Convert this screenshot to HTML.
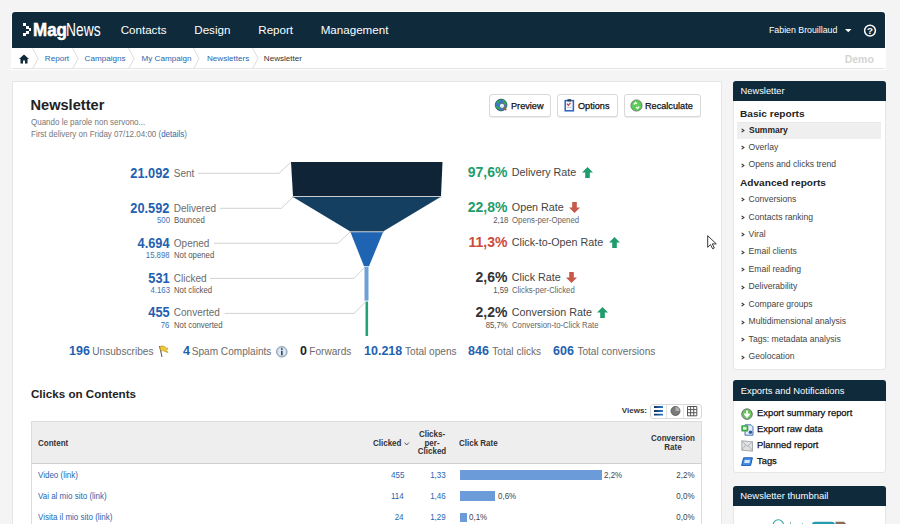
<!DOCTYPE html>
<html><head><meta charset="utf-8"><style>
html,body{margin:0;padding:0;}
body{width:900px;height:524px;overflow:hidden;background:#f4f4f4;position:relative;font-family:"Liberation Sans",sans-serif;}
.a{position:absolute;box-sizing:border-box;}
.t{position:absolute;white-space:nowrap;}
svg{position:absolute;overflow:visible;}
</style></head><body>
<div class="a" style="left:11px;top:11px;width:875px;height:59px;background:#fff;border-radius:4px 4px 0 0;"></div>
<div class="a" style="left:12px;top:12px;width:873px;height:36px;background:#0e2a3b;border-radius:3px 3px 0 0;"></div>
<div class="a" style="left:23.2px;top:23.2px;width:2.7px;height:2.7px;background:#fff;"></div>
<div class="a" style="left:25.9px;top:25.9px;width:2.7px;height:2.7px;background:#fff;"></div>
<div class="a" style="left:28.6px;top:28.4px;width:2.7px;height:2.7px;background:#fff;"></div>
<div class="a" style="left:25.9px;top:30.9px;width:2.7px;height:2.7px;background:#fff;"></div>
<div class="a" style="left:23.2px;top:33.3px;width:2.7px;height:2.7px;background:#fff;"></div>
<div class="t" style="left:33.3px;top:21.98px;font-size:17.5px;line-height:17.5px;color:#fff;font-weight:bold;transform:scaleX(0.97);transform-origin:left center;-webkit-text-stroke:0.5px #fff;">Mag</div>
<div class="t" style="left:65.8px;top:21.98px;font-size:17.5px;line-height:17.5px;color:#fff;transform:scaleX(0.79);transform-origin:left center;">News</div>
<div class="t" style="left:120.7px;top:24.38px;font-size:11.6px;line-height:11.6px;color:#fff;">Contacts</div>
<div class="t" style="left:194.3px;top:24.38px;font-size:11.6px;line-height:11.6px;color:#fff;">Design</div>
<div class="t" style="left:258.3px;top:24.38px;font-size:11.6px;line-height:11.6px;color:#fff;">Report</div>
<div class="t" style="left:320.7px;top:24.38px;font-size:11.6px;line-height:11.6px;color:#fff;">Management</div>
<div class="t" style="left:769.4px;top:25.06px;font-size:9.5px;line-height:9.5px;color:#fff;transform:scaleX(0.925);transform-origin:left center;">Fabien Brouillaud</div>
<svg style="left:845px;top:29px" width="7" height="4"><path d="M0 0H6.5L3.25 3.2Z" fill="#fff"/></svg>
<svg style="left:863px;top:24px" width="14" height="14"><circle cx="7" cy="6.6" r="5.4" fill="none" stroke="#fff" stroke-width="1.5"/><text x="7" y="10.1" font-family="Liberation Sans" font-weight="bold" font-size="9.8" fill="#fff" text-anchor="middle">?</text></svg>
<div class="a" style="left:12px;top:68px;width:873px;height:1px;background:#e4e4e4;"></div>
<svg style="left:18.6px;top:53.8px" width="11" height="10"><path d="M5 0.5L0 5H1.5V9.5H4V6.5H6V9.5H8.5V5H10Z" fill="#0f283a"/></svg>
<svg style="left:31.5px;top:48px" width="8" height="21"><path d="M0.5 0L6 10.5L0.5 21" fill="none" stroke="#dedede" stroke-width="1"/></svg>
<svg style="left:72.2px;top:48px" width="8" height="21"><path d="M0.5 0L6 10.5L0.5 21" fill="none" stroke="#dedede" stroke-width="1"/></svg>
<svg style="left:127.8px;top:48px" width="8" height="21"><path d="M0.5 0L6 10.5L0.5 21" fill="none" stroke="#dedede" stroke-width="1"/></svg>
<svg style="left:192.8px;top:48px" width="8" height="21"><path d="M0.5 0L6 10.5L0.5 21" fill="none" stroke="#dedede" stroke-width="1"/></svg>
<svg style="left:252.0px;top:48px" width="8" height="21"><path d="M0.5 0L6 10.5L0.5 21" fill="none" stroke="#dedede" stroke-width="1"/></svg>
<div class="t" style="left:44.8px;top:55.14px;font-size:8.1px;line-height:8.1px;color:#2a66ae;">Report</div>
<div class="t" style="left:84.6px;top:55.14px;font-size:8.1px;line-height:8.1px;color:#2a66ae;">Campaigns</div>
<div class="t" style="left:141.5px;top:55.14px;font-size:8.1px;line-height:8.1px;color:#2a66ae;">My Campaign</div>
<div class="t" style="left:207px;top:55.14px;font-size:8.1px;line-height:8.1px;color:#2a66ae;">Newsletters</div>
<div class="t" style="left:263.8px;top:55.14px;font-size:8.1px;line-height:8.1px;color:#333;">Newsletter</div>
<div class="t" style="right:26.200000000000045px;top:53.61px;font-size:10.5px;line-height:10.5px;color:#d4d4d4;font-weight:bold;">Demo</div>
<div class="a" style="left:12px;top:81px;width:710px;height:460px;background:#fff;border:1px solid #e6e6e6;"></div>
<div class="t" style="left:30.5px;top:98.14px;font-size:14.6px;line-height:14.6px;color:#222;font-weight:bold;">Newsletter</div>
<div class="t" style="left:31px;top:118.22px;font-size:8.6px;line-height:8.6px;color:#777;transform:scaleX(0.93);transform-origin:left center;">Quando le parole non servono...</div>
<div class="t" style="left:31px;top:129.72px;font-size:8.6px;line-height:8.6px;color:#777;transform:scaleX(0.93);transform-origin:left center;">First delivery on Friday 07/12.04:00 (<span style="color:#2a66ae">details</span>)</div>
<div class="a" style="left:489px;top:94px;width:62px;height:22.5px;background:#fff;border:1px solid #d9d9d9;border-radius:3px;box-shadow:0 1px 0 #ececec;"></div>
<div class="t" style="left:510.7px;top:100.84px;font-size:9.4px;line-height:9.4px;color:#111;transform:scaleX(0.975);transform-origin:left center;-webkit-text-stroke:0.25px #111;">Preview</div>
<div class="a" style="left:556.5px;top:94px;width:61.5px;height:22.5px;background:#fff;border:1px solid #d9d9d9;border-radius:3px;box-shadow:0 1px 0 #ececec;"></div>
<div class="t" style="left:577.6px;top:100.84px;font-size:9.4px;line-height:9.4px;color:#111;transform:scaleX(0.975);transform-origin:left center;-webkit-text-stroke:0.25px #111;">Options</div>
<div class="a" style="left:624.2px;top:94px;width:77.19999999999993px;height:22.5px;background:#fff;border:1px solid #d9d9d9;border-radius:3px;box-shadow:0 1px 0 #ececec;"></div>
<div class="t" style="left:645.4px;top:100.84px;font-size:9.4px;line-height:9.4px;color:#111;transform:scaleX(0.975);transform-origin:left center;-webkit-text-stroke:0.25px #111;">Recalculate</div>
<svg style="left:494px;top:98.3px" width="14" height="14"><circle cx="7.1" cy="7" r="5.9" fill="#3a78c8"/><path d="M2.5 4.5Q4 2 6 1.6L5.5 4L3.2 6ZM8.5 1.5Q11 2.5 12.5 5L11 7.5L9.5 5.5ZM1.6 8Q3 10.5 5 12L5.5 9.5L3.5 8Z" fill="#2fae4a"/><circle cx="7.1" cy="7" r="5.9" fill="none" stroke="#2a5a40" stroke-width="0.7"/><circle cx="8" cy="7.8" r="2.6" fill="#dff0ff" stroke="#567" stroke-width="0.9"/><path d="M9.8 9.8L12.3 12.3" stroke="#9a6a30" stroke-width="1.6"/></svg>
<svg style="left:563.5px;top:99px" width="11" height="13"><rect x="1.2" y="1.6" width="8.2" height="10.2" fill="#f4f6fb" stroke="#2d64c0" stroke-width="1.5"/><rect x="3.5" y="0.2" width="3.6" height="2.2" fill="#2a3a50"/><path d="M3 4.6L4.3 6.3L6.5 3.8" fill="none" stroke="#c03838" stroke-width="1.1"/><path d="M3 8.5H7.4" stroke="#b8c4d0" stroke-width="0.8"/></svg>
<svg style="left:630px;top:99px" width="13" height="13"><circle cx="6.5" cy="6.5" r="5.6" fill="#5ccc58" stroke="#6a6a6a" stroke-width="0.8"/><path d="M3.8 5.5L5.5 3.5L7 5M9.2 7.5L7.5 9.5L6 8" fill="none" stroke="#f2fff2" stroke-width="1.3"/></svg>
<svg style="left:0;top:0" width="900" height="524"><path d="M198 173.3H279L290.5 162.5M220 208.3H281.5L293 197M214 243.3H338L350 232M210 278.4H354L365 267M224.7 313.4H354L365.5 302" fill="none" stroke="#d2d2d2" stroke-width="1"/><path d="M292 196.2H441.5V197.4H292Z" fill="#b8bcc0"/><path d="M349.5 231.2H384V232.4H349.5Z" fill="#b8c0c8"/><path d="M291 162H442.5L441 196H293Z" fill="#0f2537"/><path d="M293 197H440.5L383.5 231.2H350Z" fill="#153f60"/><path d="M350.5 232.2H383L369 266.3H364Z" fill="#1f64b3"/><rect x="364.5" y="267" width="4" height="33.6" fill="#6f9fd8"/><rect x="365.5" y="301.6" width="2.6" height="34.4" fill="#24a37a"/></svg>
<div class="t" style="right:730.5px;top:165.88px;font-size:14.2px;line-height:14.2px;color:#1f61b0;font-weight:bold;transform:scaleX(0.9);transform-origin:right center;">21.092</div>
<div class="t" style="left:173.8px;top:168.83px;font-size:10px;line-height:10px;color:#6b6b6b;">Sent</div>
<div class="t" style="right:730.5px;top:200.78px;font-size:14.2px;line-height:14.2px;color:#1f61b0;font-weight:bold;transform:scaleX(0.9);transform-origin:right center;">20.592</div>
<div class="t" style="left:173.8px;top:203.73px;font-size:10px;line-height:10px;color:#6b6b6b;">Delivered</div>
<div class="t" style="right:730.5px;top:216.39px;font-size:8.4px;line-height:8.4px;color:#3d73b8;transform:scaleX(0.93);transform-origin:right center;">500</div>
<div class="t" style="left:173.8px;top:216.39px;font-size:8.4px;line-height:8.4px;color:#555;transform:scaleX(0.93);transform-origin:left center;">Bounced</div>
<div class="t" style="right:730.5px;top:235.68px;font-size:14.2px;line-height:14.2px;color:#1f61b0;font-weight:bold;transform:scaleX(0.9);transform-origin:right center;">4.694</div>
<div class="t" style="left:173.8px;top:238.63px;font-size:10px;line-height:10px;color:#6b6b6b;">Opened</div>
<div class="t" style="right:730.5px;top:251.29px;font-size:8.4px;line-height:8.4px;color:#3d73b8;transform:scaleX(0.93);transform-origin:right center;">15.898</div>
<div class="t" style="left:173.8px;top:251.29px;font-size:8.4px;line-height:8.4px;color:#555;transform:scaleX(0.93);transform-origin:left center;">Not opened</div>
<div class="t" style="right:730.5px;top:270.58px;font-size:14.2px;line-height:14.2px;color:#1f61b0;font-weight:bold;transform:scaleX(0.9);transform-origin:right center;">531</div>
<div class="t" style="left:173.8px;top:273.53px;font-size:10px;line-height:10px;color:#6b6b6b;">Clicked</div>
<div class="t" style="right:730.5px;top:286.19px;font-size:8.4px;line-height:8.4px;color:#3d73b8;transform:scaleX(0.93);transform-origin:right center;">4.163</div>
<div class="t" style="left:173.8px;top:286.19px;font-size:8.4px;line-height:8.4px;color:#555;transform:scaleX(0.93);transform-origin:left center;">Not clicked</div>
<div class="t" style="right:730.5px;top:305.48px;font-size:14.2px;line-height:14.2px;color:#1f61b0;font-weight:bold;transform:scaleX(0.9);transform-origin:right center;">455</div>
<div class="t" style="left:173.8px;top:308.43px;font-size:10px;line-height:10px;color:#6b6b6b;">Converted</div>
<div class="t" style="right:730.5px;top:321.09px;font-size:8.4px;line-height:8.4px;color:#3d73b8;transform:scaleX(0.93);transform-origin:right center;">76</div>
<div class="t" style="left:173.8px;top:321.09px;font-size:8.4px;line-height:8.4px;color:#555;transform:scaleX(0.93);transform-origin:left center;">Not converted</div>
<div class="t" style="right:392.5px;top:165.45px;font-size:14px;line-height:14px;color:#1f9d6c;font-weight:bold;">97,6%</div>
<div class="t" style="left:511.8px;top:167.40px;font-size:10.75px;line-height:10.75px;color:#444;">Delivery Rate</div>
<div class="t" style="right:392.5px;top:200.35px;font-size:14px;line-height:14px;color:#1f9d6c;font-weight:bold;">22,8%</div>
<div class="t" style="left:511.8px;top:202.30px;font-size:10.75px;line-height:10.75px;color:#444;">Open Rate</div>
<div class="t" style="right:392px;top:216.09px;font-size:8.4px;line-height:8.4px;color:#555;transform:scaleX(0.93);transform-origin:right center;">2,18</div>
<div class="t" style="left:511.8px;top:216.09px;font-size:8.4px;line-height:8.4px;color:#666;transform:scaleX(0.93);transform-origin:left center;">Opens-per-Opened</div>
<div class="t" style="right:392.5px;top:235.25px;font-size:14px;line-height:14px;color:#cc4a3d;font-weight:bold;">11,3%</div>
<div class="t" style="left:511.8px;top:237.20px;font-size:10.75px;line-height:10.75px;color:#444;">Click-to-Open Rate</div>
<div class="t" style="right:392.5px;top:270.15px;font-size:14px;line-height:14px;color:#333;font-weight:bold;">2,6%</div>
<div class="t" style="left:511.8px;top:272.10px;font-size:10.75px;line-height:10.75px;color:#444;">Click Rate</div>
<div class="t" style="right:392px;top:285.89px;font-size:8.4px;line-height:8.4px;color:#555;transform:scaleX(0.93);transform-origin:right center;">1,59</div>
<div class="t" style="left:511.8px;top:285.89px;font-size:8.4px;line-height:8.4px;color:#666;transform:scaleX(0.93);transform-origin:left center;">Clicks-per-Clicked</div>
<div class="t" style="right:392.5px;top:305.05px;font-size:14px;line-height:14px;color:#333;font-weight:bold;">2,2%</div>
<div class="t" style="left:511.8px;top:307.00px;font-size:10.75px;line-height:10.75px;color:#444;">Conversion Rate</div>
<div class="t" style="right:392px;top:320.79px;font-size:8.4px;line-height:8.4px;color:#555;transform:scaleX(0.93);transform-origin:right center;">85,7%</div>
<div class="t" style="left:511.8px;top:320.79px;font-size:8.4px;line-height:8.4px;color:#666;transform:scaleX(0.93);transform-origin:left center;">Conversion-to-Click Rate</div>
<svg style="left:582px;top:167.4px" width="12" height="11"><path d="M5.5 0L11 5.5H7.8V11H3.2V5.5H0Z" fill="#1f9d6c"/></svg>
<svg style="left:568.6px;top:202px" width="12" height="11"><path d="M5.5 11L11 5.5H7.8V0H3.2V5.5H0Z" fill="#c6594a"/></svg>
<svg style="left:608.5px;top:237px" width="12" height="11"><path d="M5.5 0L11 5.5H7.8V11H3.2V5.5H0Z" fill="#1f9d6c"/></svg>
<svg style="left:566px;top:272px" width="12" height="11"><path d="M5.5 11L11 5.5H7.8V0H3.2V5.5H0Z" fill="#c6594a"/></svg>
<svg style="left:597px;top:306.5px" width="12" height="11"><path d="M5.5 0L11 5.5H7.8V11H3.2V5.5H0Z" fill="#1f9d6c"/></svg>
<div class="t" style="left:69.3px;top:344.48px;font-size:13.6px;line-height:13.6px;color:#1f61b0;font-weight:bold;transform:scaleX(0.92);transform-origin:left center;">196</div>
<div class="t" style="left:92.3px;top:347.45px;font-size:10.1px;line-height:10.1px;color:#6b6b6b;">Unsubscribes</div>
<div class="t" style="left:182.7px;top:344.48px;font-size:13.6px;line-height:13.6px;color:#1f61b0;font-weight:bold;transform:scaleX(0.92);transform-origin:left center;">4</div>
<div class="t" style="left:191.7px;top:347.45px;font-size:10.1px;line-height:10.1px;color:#6b6b6b;">Spam Complaints</div>
<div class="t" style="left:300px;top:344.48px;font-size:13.6px;line-height:13.6px;color:#222;font-weight:bold;transform:scaleX(0.92);transform-origin:left center;">0</div>
<div class="t" style="left:309.3px;top:347.45px;font-size:10.1px;line-height:10.1px;color:#6b6b6b;">Forwards</div>
<div class="t" style="left:363.6px;top:344.48px;font-size:13.6px;line-height:13.6px;color:#1f61b0;font-weight:bold;transform:scaleX(0.92);transform-origin:left center;">10.218</div>
<div class="t" style="left:405px;top:347.45px;font-size:10.1px;line-height:10.1px;color:#6b6b6b;">Total opens</div>
<div class="t" style="left:468px;top:344.48px;font-size:13.6px;line-height:13.6px;color:#1f61b0;font-weight:bold;transform:scaleX(0.92);transform-origin:left center;">846</div>
<div class="t" style="left:492.3px;top:347.45px;font-size:10.1px;line-height:10.1px;color:#6b6b6b;">Total clicks</div>
<div class="t" style="left:552.8px;top:344.48px;font-size:13.6px;line-height:13.6px;color:#1f61b0;font-weight:bold;transform:scaleX(0.92);transform-origin:left center;">606</div>
<div class="t" style="left:577.4px;top:347.45px;font-size:10.1px;line-height:10.1px;color:#6b6b6b;">Total conversions</div>
<svg style="left:158px;top:345px" width="11" height="13"><path d="M1.5 1L4 12" stroke="#555" stroke-width="1"/><path d="M2 1.5Q5 0 7 2T10 3L8.5 5.5L10 7.5Q8 7 6 6T3 6.5Z" fill="#f0c838" stroke="#b89020" stroke-width="0.6"/></svg>
<svg style="left:276px;top:345.5px" width="12" height="12"><circle cx="5.8" cy="5.8" r="5.3" fill="#b8c8d8" stroke="#7890a8" stroke-width="0.8"/><circle cx="5.8" cy="5.8" r="4" fill="#dfe8f2"/><rect x="5" y="4.8" width="1.7" height="4.5" fill="#34506c"/><circle cx="5.85" cy="3" r="0.95" fill="#34506c"/></svg>
<div class="t" style="left:31px;top:388.08px;font-size:11.6px;line-height:11.6px;color:#222;font-weight:bold;">Clicks on Contents</div>
<div class="t" style="right:253px;top:407.03px;font-size:8px;line-height:8px;color:#333;font-weight:bold;">Views:</div>
<div class="a" style="left:649.5px;top:404px;width:52.3px;height:14.5px;background:#fff;border:1px solid #d8d8d8;border-radius:3px;"></div>
<div class="a" style="left:666.2px;top:404.5px;width:1px;height:13.5px;background:#e2e2e2;"></div>
<div class="a" style="left:683.2px;top:404.5px;width:1px;height:13.5px;background:#e2e2e2;"></div>
<svg style="left:653px;top:405px" width="12" height="12"><defs><linearGradient id="lg"><stop offset="0" stop-color="#0f3060"/><stop offset="1" stop-color="#2a7ad0"/></linearGradient></defs><path d="M1 2H10M1 6H10M1 9.6H10" stroke="url(#lg)" stroke-width="1.9"/></svg>
<svg style="left:670px;top:405px" width="12" height="12"><circle cx="5.5" cy="6" r="4.5" fill="#7a7a7a" stroke="#505050" stroke-width="0.8"/><path d="M5.5 6V1.9A4.1 4.1 0 0 1 9.6 6Z" fill="#b0b0b0"/></svg>
<svg style="left:687px;top:406px" width="11" height="11"><path d="M0.5 0.5H9.8V9.8H0.5ZM0.5 3.6H9.8M0.5 6.7H9.8M3.6 0.5V9.8M6.7 0.5V9.8" fill="none" stroke="#555" stroke-width="1"/></svg>
<div class="a" style="left:31px;top:421.3px;width:671px;height:120px;background:#fff;border:1px solid #dcdcdc;"></div>
<div class="a" style="left:31px;top:421.3px;width:671px;height:42.5px;background:#eeeeee;border:1px solid #dcdcdc;border-bottom:1px solid #d0d0d0;"></div>
<div class="t" style="left:38.2px;top:438.92px;font-size:8.6px;line-height:8.6px;color:#333;font-weight:bold;transform:scaleX(0.93);transform-origin:left center;">Content</div>
<div class="t" style="left:372.9px;top:438.82px;font-size:8.6px;line-height:8.6px;color:#333;font-weight:bold;transform:scaleX(0.93);transform-origin:left center;">Clicked</div>
<svg style="left:403.5px;top:441.8px" width="6" height="4"><path d="M0.6 0.6L2.7 3L4.8 0.6" fill="none" stroke="#444" stroke-width="0.9"/></svg>
<div class="t" style="left:231.5px;width:400px;text-align:center;top:429.72px;font-size:8.6px;line-height:8.6px;color:#333;font-weight:bold;transform:scaleX(0.93);transform-origin:center center;">Clicks-</div>
<div class="t" style="left:231.5px;width:400px;text-align:center;top:438.72px;font-size:8.6px;line-height:8.6px;color:#333;font-weight:bold;transform:scaleX(0.93);transform-origin:center center;">per-</div>
<div class="t" style="left:231.5px;width:400px;text-align:center;top:447.12px;font-size:8.6px;line-height:8.6px;color:#333;font-weight:bold;transform:scaleX(0.93);transform-origin:center center;">Clicked</div>
<div class="t" style="left:459px;top:438.82px;font-size:8.6px;line-height:8.6px;color:#333;font-weight:bold;transform:scaleX(0.93);transform-origin:left center;">Click Rate</div>
<div class="t" style="left:472.5px;width:400px;text-align:center;top:433.92px;font-size:8.6px;line-height:8.6px;color:#333;font-weight:bold;transform:scaleX(0.93);transform-origin:center center;">Conversion</div>
<div class="t" style="left:472.5px;width:400px;text-align:center;top:443.12px;font-size:8.6px;line-height:8.6px;color:#333;font-weight:bold;transform:scaleX(0.93);transform-origin:center center;">Rate</div>
<div class="t" style="left:38.2px;top:470.82px;font-size:8.6px;line-height:8.6px;color:#2a66ae;transform:scaleX(0.93);transform-origin:left center;">Video (link)</div>
<div class="t" style="right:496px;top:470.82px;font-size:8.6px;line-height:8.6px;color:#2a66ae;transform:scaleX(0.93);transform-origin:right center;">455</div>
<div class="t" style="right:454px;top:470.82px;font-size:8.6px;line-height:8.6px;color:#2a66ae;transform:scaleX(0.93);transform-origin:right center;">1,33</div>
<div class="a" style="left:459.5px;top:470.20000000000005px;width:142px;height:9.5px;background:#6b9cd9;"></div>
<div class="t" style="left:604.0px;top:470.82px;font-size:8.6px;line-height:8.6px;color:#444;transform:scaleX(0.93);transform-origin:left center;">2,2%</div>
<div class="t" style="right:205.5px;top:470.82px;font-size:8.6px;line-height:8.6px;color:#444;transform:scaleX(0.93);transform-origin:right center;">2,2%</div>
<div class="t" style="left:38.2px;top:492.02px;font-size:8.6px;line-height:8.6px;color:#2a66ae;transform:scaleX(0.93);transform-origin:left center;">Vai al mio sito (link)</div>
<div class="t" style="right:496px;top:492.02px;font-size:8.6px;line-height:8.6px;color:#2a66ae;transform:scaleX(0.93);transform-origin:right center;">114</div>
<div class="t" style="right:454px;top:492.02px;font-size:8.6px;line-height:8.6px;color:#2a66ae;transform:scaleX(0.93);transform-origin:right center;">1,46</div>
<div class="a" style="left:459.5px;top:491.40000000000003px;width:35.5px;height:9.5px;background:#6b9cd9;"></div>
<div class="t" style="left:497.5px;top:492.02px;font-size:8.6px;line-height:8.6px;color:#444;transform:scaleX(0.93);transform-origin:left center;">0,6%</div>
<div class="t" style="right:205.5px;top:492.02px;font-size:8.6px;line-height:8.6px;color:#444;transform:scaleX(0.93);transform-origin:right center;">0,0%</div>
<div class="t" style="left:38.2px;top:513.22px;font-size:8.6px;line-height:8.6px;color:#2a66ae;transform:scaleX(0.93);transform-origin:left center;">Visita il mio sito (link)</div>
<div class="t" style="right:496px;top:513.22px;font-size:8.6px;line-height:8.6px;color:#2a66ae;transform:scaleX(0.93);transform-origin:right center;">24</div>
<div class="t" style="right:454px;top:513.22px;font-size:8.6px;line-height:8.6px;color:#2a66ae;transform:scaleX(0.93);transform-origin:right center;">1,29</div>
<div class="a" style="left:459.5px;top:512.6px;width:7px;height:9.5px;background:#6b9cd9;"></div>
<div class="t" style="left:469.0px;top:513.22px;font-size:8.6px;line-height:8.6px;color:#444;transform:scaleX(0.93);transform-origin:left center;">0,1%</div>
<div class="t" style="right:205.5px;top:513.22px;font-size:8.6px;line-height:8.6px;color:#444;transform:scaleX(0.93);transform-origin:right center;">0,0%</div>
<div class="a" style="left:733px;top:81px;width:152.5px;height:289px;background:#fff;border:1px solid #e6e6e6;border-radius:3px;"></div>
<div class="a" style="left:733px;top:81px;width:152.5px;height:20px;background:#0e2a3b;border-radius:3px 3px 0 0;"></div>
<div class="t" style="left:740.6px;top:86.83px;font-size:9.3px;line-height:9.3px;color:#fff;">Newsletter</div>
<div class="t" style="left:739.7px;top:110.01px;font-size:9.2px;line-height:9.2px;color:#222;font-weight:bold;transform:scaleX(1.1);transform-origin:left center;">Basic reports</div>
<div class="a" style="left:737px;top:121.5px;width:144px;height:17.5px;background:#efefef;border-top:1px solid #e9e9e9;"></div>
<svg style="left:741.3px;top:128px" width="4" height="5"><path d="M0.6 0.9L2.9 2.5L0.6 4.1" fill="none" stroke="#333" stroke-width="1.1"/></svg>
<div class="t" style="left:749px;top:126.00px;font-size:8.5px;line-height:8.5px;color:#222;font-weight:bold;">Summary</div>
<svg style="left:741.3px;top:145px" width="4" height="5"><path d="M0.6 0.9L2.9 2.5L0.6 4.1" fill="none" stroke="#333" stroke-width="1.1"/></svg>
<div class="t" style="left:748.6px;top:143.02px;font-size:8.6px;line-height:8.6px;color:#444;">Overlay</div>
<svg style="left:741.3px;top:163px" width="4" height="5"><path d="M0.6 0.9L2.9 2.5L0.6 4.1" fill="none" stroke="#333" stroke-width="1.1"/></svg>
<div class="t" style="left:748.6px;top:160.42px;font-size:8.6px;line-height:8.6px;color:#444;">Opens and clicks trend</div>
<div class="t" style="left:739.9px;top:179.41px;font-size:9.2px;line-height:9.2px;color:#222;font-weight:bold;transform:scaleX(1.1);transform-origin:left center;">Advanced reports</div>
<svg style="left:741.3px;top:197px" width="4" height="5"><path d="M0.6 0.9L2.9 2.5L0.6 4.1" fill="none" stroke="#333" stroke-width="1.1"/></svg>
<div class="t" style="left:748.6px;top:195.02px;font-size:8.6px;line-height:8.6px;color:#444;">Conversions</div>
<svg style="left:741.3px;top:215px" width="4" height="5"><path d="M0.6 0.9L2.9 2.5L0.6 4.1" fill="none" stroke="#333" stroke-width="1.1"/></svg>
<div class="t" style="left:748.6px;top:212.50px;font-size:8.6px;line-height:8.6px;color:#444;">Contacts ranking</div>
<svg style="left:741.3px;top:232px" width="4" height="5"><path d="M0.6 0.9L2.9 2.5L0.6 4.1" fill="none" stroke="#333" stroke-width="1.1"/></svg>
<div class="t" style="left:748.6px;top:229.98px;font-size:8.6px;line-height:8.6px;color:#444;">Viral</div>
<svg style="left:741.3px;top:250px" width="4" height="5"><path d="M0.6 0.9L2.9 2.5L0.6 4.1" fill="none" stroke="#333" stroke-width="1.1"/></svg>
<div class="t" style="left:748.6px;top:247.46px;font-size:8.6px;line-height:8.6px;color:#444;">Email clients</div>
<svg style="left:741.3px;top:267px" width="4" height="5"><path d="M0.6 0.9L2.9 2.5L0.6 4.1" fill="none" stroke="#333" stroke-width="1.1"/></svg>
<div class="t" style="left:748.6px;top:264.94px;font-size:8.6px;line-height:8.6px;color:#444;">Email reading</div>
<svg style="left:741.3px;top:285px" width="4" height="5"><path d="M0.6 0.9L2.9 2.5L0.6 4.1" fill="none" stroke="#333" stroke-width="1.1"/></svg>
<div class="t" style="left:748.6px;top:282.42px;font-size:8.6px;line-height:8.6px;color:#444;">Deliverability</div>
<svg style="left:741.3px;top:302px" width="4" height="5"><path d="M0.6 0.9L2.9 2.5L0.6 4.1" fill="none" stroke="#333" stroke-width="1.1"/></svg>
<div class="t" style="left:748.6px;top:299.90px;font-size:8.6px;line-height:8.6px;color:#444;">Compare groups</div>
<svg style="left:741.3px;top:320px" width="4" height="5"><path d="M0.6 0.9L2.9 2.5L0.6 4.1" fill="none" stroke="#333" stroke-width="1.1"/></svg>
<div class="t" style="left:748.6px;top:317.38px;font-size:8.6px;line-height:8.6px;color:#444;">Multidimensional analysis</div>
<svg style="left:741.3px;top:337px" width="4" height="5"><path d="M0.6 0.9L2.9 2.5L0.6 4.1" fill="none" stroke="#333" stroke-width="1.1"/></svg>
<div class="t" style="left:748.6px;top:334.86px;font-size:8.6px;line-height:8.6px;color:#444;">Tags: metadata analysis</div>
<svg style="left:741.3px;top:355px" width="4" height="5"><path d="M0.6 0.9L2.9 2.5L0.6 4.1" fill="none" stroke="#333" stroke-width="1.1"/></svg>
<div class="t" style="left:748.6px;top:352.34px;font-size:8.6px;line-height:8.6px;color:#444;">Geolocation</div>
<div class="a" style="left:733px;top:380.2px;width:152.5px;height:93.3px;background:#fff;border:1px solid #e6e6e6;border-radius:3px;"></div>
<div class="a" style="left:733px;top:380.2px;width:152.5px;height:20.5px;background:#0e2a3b;border-radius:3px 3px 0 0;"></div>
<div class="t" style="left:740.7px;top:386.24px;font-size:9.4px;line-height:9.4px;color:#fff;">Exports and Notifications</div>
<div class="t" style="left:757.3px;top:408.81px;font-size:9.2px;line-height:9.2px;color:#111;transform:scaleX(1.02);transform-origin:left center;-webkit-text-stroke:0.25px #111;">Export summary report</div>
<div class="t" style="left:757.3px;top:424.81px;font-size:9.2px;line-height:9.2px;color:#111;transform:scaleX(1.02);transform-origin:left center;-webkit-text-stroke:0.25px #111;">Export raw data</div>
<div class="t" style="left:757.3px;top:440.81px;font-size:9.2px;line-height:9.2px;color:#111;transform:scaleX(1.02);transform-origin:left center;-webkit-text-stroke:0.25px #111;">Planned report</div>
<div class="t" style="left:757.3px;top:456.81px;font-size:9.2px;line-height:9.2px;color:#111;transform:scaleX(1.02);transform-origin:left center;-webkit-text-stroke:0.25px #111;">Tags</div>
<svg style="left:741px;top:408px" width="13" height="13"><circle cx="6" cy="6.1" r="5.3" fill="#68c25a" stroke="#6a6a78" stroke-width="0.9"/><path d="M6 2.6V7.2M3.4 5.6L6 8.9L8.6 5.6" fill="none" stroke="#fff" stroke-width="1.7"/></svg>
<svg style="left:740.5px;top:424px" width="13" height="12"><path d="M4 0.8H10L12 2.8V11.2H4Z" fill="#e4ecf6" stroke="#3a68b0" stroke-width="0.9"/><rect x="0.3" y="1.2" width="7" height="6.3" rx="0.8" fill="#3aa84a"/><rect x="2" y="2.8" width="3.6" height="3" fill="#d8f0d8"/><circle cx="9.5" cy="8.3" r="1.8" fill="#2f5fa8"/></svg>
<svg style="left:741px;top:440px" width="13" height="12"><path d="M0.8 0.8L11.5 1.8V11.2L0.8 10.2Z" fill="#dfe1e4" stroke="#999" stroke-width="0.8"/><path d="M0.8 0.8L6.2 6.6L11.5 1.8M0.8 10.2L4.6 5.2M11.5 11.2L7.5 5.6" fill="none" stroke="#a4a8ac" stroke-width="0.8"/></svg>
<svg style="left:741px;top:457px" width="13" height="10"><path d="M2.6 0.8H11.4L9.6 8.4H0.6Z" fill="#4a8ee0" stroke="#1a5ab8" stroke-width="1"/><path d="M3.8 3H9L8.4 6H3.1Z" fill="#d6e8fb"/></svg>
<div class="a" style="left:733px;top:485.5px;width:152.5px;height:60px;background:#fff;border:1px solid #e6e6e6;border-radius:3px;"></div>
<div class="a" style="left:733px;top:485.5px;width:152.5px;height:20px;background:#0e2a3b;border-radius:3px 3px 0 0;"></div>
<div class="t" style="left:740.3px;top:490.70px;font-size:9.45px;line-height:9.45px;color:#fff;">Newsletter thumbnail</div>
<svg style="left:707px;top:234.5px" width="12" height="15"><path d="M0.7 0.7V12.3L3.5 9.6L5.6 13.8L7.3 13L5.3 8.9H9.3Z" fill="#fff" stroke="#222" stroke-width="0.9"/></svg>
<svg style="left:770px;top:518px" width="90" height="8"><circle cx="8.3" cy="7" r="5.2" fill="none" stroke="#2aa0a0" stroke-width="1.1"/><path d="M20.5 4V8M22.5 6V8M32.5 5V8" stroke="#6aaab0" stroke-width="0.8"/><rect x="41.7" y="3.7" width="23.5" height="8" rx="3.5" fill="#2a9ab0"/><path d="M65.5 3.7H74L78 8H65.5Z" fill="#8a6a58"/></svg>
</body></html>
